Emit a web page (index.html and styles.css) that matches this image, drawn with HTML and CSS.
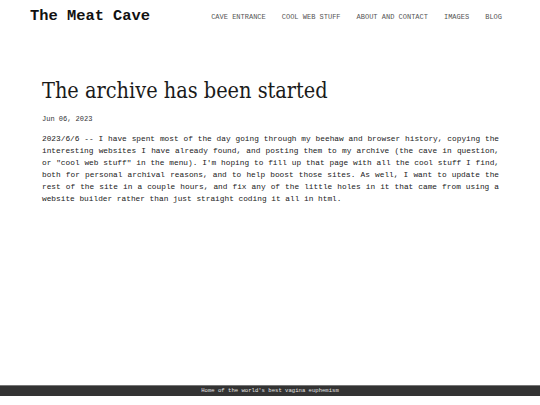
FILE: index.html
```html
<!DOCTYPE html>
<html lang="en">
<head>
<meta charset="utf-8">
<title>The Meat Cave</title>
<link rel="stylesheet" href="styles.css">
</head>
<body>
<div class="page">
  <header class="site-header">
    <div class="site-title">The Meat Cave</div>
    <nav class="site-nav">
      <a href="#">CAVE ENTRANCE</a>
      <a href="#">COOL WEB STUFF</a>
      <a href="#">ABOUT AND CONTACT</a>
      <a href="#">IMAGES</a>
      <a href="#">BLOG</a>
    </nav>
  </header>
  <main class="post">
    <h1 class="post-title">The archive has been started</h1>
    <div class="post-date">Jun 06, 2023</div>
    <p class="post-body">2023/6/6 -- I have spent most of the day going through my beehaw and browser history, copying the interesting websites I have already found, and posting them to my archive (the cave in question, or "cool web stuff" in the menu). I'm hoping to fill up that page with all the cool stuff I find, both for personal archival reasons, and to help boost those sites. As well, I want to update the rest of the site in a couple hours, and fix any of the little holes in it that came from using a website builder rather than just straight coding it all in html.</p>
  </main>
  <footer class="site-footer">Home of the world's best vagina euphemism</footer>
</div>
</body>
</html>
```
FILE: styles.css
```css
html, body {
  margin: 0;
  padding: 0;
  background: #fff;
}
.page {
  min-height: 396px;
  display: flex;
  flex-direction: column;
  font-family: "Liberation Mono", "Courier New", monospace;
  color: #222;
}
.site-header {
  display: flex;
  align-items: center;
  justify-content: space-between;
  padding: 6px 38px 0 30px;
  height: 20px;
}
.site-title {
  font-size: 15.4px;
  font-weight: bold;
  color: #111;
}
.site-nav {
  display: flex;
  gap: 16px;
  padding-top: 2px;
}
.site-nav a {
  font-size: 7px;
  color: #555;
  text-decoration: none;
}
.post {
  flex: 1;
  padding: 50px 0 0 42px;
  width: 457px;
}
.post-title {
  margin: 0;
  font-family: "DejaVu Serif", serif;
  font-stretch: condensed;
  font-weight: normal;
  font-size: 21.5px;
  line-height: 30px;
  color: #1a1a1a;
}
.post-date {
  margin-top: 9px;
  font-size: 7px;
  color: #333;
}
.post-body {
  margin: 10px 0 0;
  font-size: 7.8px;
  line-height: 12px;
  text-align: justify;
  color: #222;
}
.site-footer {
  background: #333;
  color: #e4e4e4;
  font-size: 5.6px;
  line-height: 10px;
  height: 10px;
  text-align: center;
  border-top: 1px solid #777;
}
```
